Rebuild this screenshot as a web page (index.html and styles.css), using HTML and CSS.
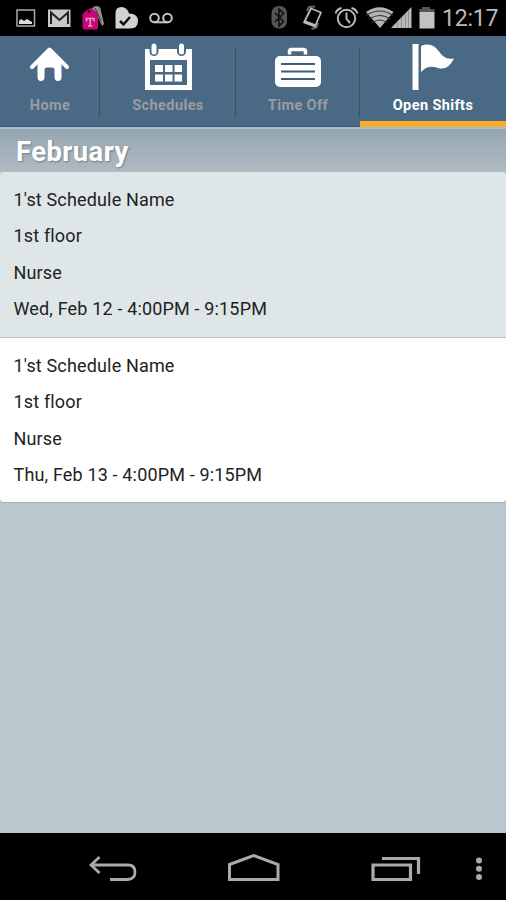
FILE: index.html
```html
<!DOCTYPE html>
<html lang="en">
<head>
  <meta charset="UTF-8">
  <title>Open Shifts</title>
  <link rel="stylesheet" href="styles.css">
</head>
<body>
  <div class="screen">

    <!-- Status bar -->
    <div class="status-bar">
      <div class="status-icons">
        <svg width="32" height="36" viewBox="10 0 32 36">
          <rect x="17" y="10" width="17.5" height="16" fill="none" stroke="#aaa" stroke-width="1.5"/>
          <path d="M19 24v-3l2-2 3 2 3-2 5 3v2z" fill="#ddd"/>
        </svg>
        <svg width="34" height="36" viewBox="42 0 34 36">
          <rect x="48" y="9.500" width="22.500" height="17.500" fill="#c8c8c8"/>
          <path d="M51 24V12.500L59.500 20L68 12.500V24" fill="none" stroke="#222" stroke-width="2"/>
        </svg>
        <svg width="34" height="36" viewBox="76 0 34 36">
          <path d="M91 12q0-5 5-6 5 0 5 5l3 13-2 2-5-11-3 4z" fill="#909090"/>
          <path d="M95 8l6 13" stroke="#333"/>
          <path d="M87 10l4-2 7 5v14q0 2.500-2 2.500H85q-2.500 0-2.500-2.500V14z" fill="#c5067a"/>
          <circle cx="89" cy="11.500" r="1.400" fill="#300"/>
          <path d="M86.500 21.500v-3h7.500v3M90.200 18.500V26M88 26h4.500" fill="none" stroke="#ef9ccb" stroke-width="1.500"/>
        </svg>
        <svg width="34" height="36" viewBox="110 0 34 36">
          <path d="M115.500 28.500V13q0-6 6-6 5.500 0 7.500 6.500 9 0 9 7.500 0 7.500-8 7.500z" fill="#d2d2d2"/>
          <path d="M120 21l3.500 3.500 6.500-7.500" fill="none" stroke="#111" stroke-width="2.500"/>
        </svg>
        <svg width="36" height="36" viewBox="144 0 36 36">
          <g fill="none" stroke="#c5c5c5" stroke-width="2">
            <circle cx="154.500" cy="18" r="4.300"/><circle cx="167.500" cy="18" r="4.300"/>
            <path d="M154.500 22.300h13"/>
          </g>
        </svg>
      </div>
      <div class="status-icons">
        <svg width="30" height="36" viewBox="265 0 30 36">
          <rect x="271.500" y="6" width="15.500" height="22.500" rx="7" fill="#555"/>
          <path d="M275 13l8.500 8.500-4.500 4.500V9l4.500 4.500-8.500 8.500" fill="none" stroke="#111" stroke-width="1.600"/>
        </svg>
        <svg width="35" height="36" viewBox="295 0 35 36">
          <path d="M307 11l2-4 6-.5M318 23l-1.500 4.500-5 1.500" fill="none" stroke="#666" stroke-width="2"/>
          <path d="M311 8.500l10 4-6 14-11-4z" fill="#000" stroke="#bbb" stroke-width="1.800" stroke-linejoin="round"/>
          <path d="M304.500 21.500l10.500 4" stroke="#bbb" stroke-width="2.500"/>
        </svg>
        <svg width="34" height="36" viewBox="330 0 34 36">
          <g fill="none" stroke="#bbb" stroke-width="1.900">
            <circle cx="346.500" cy="18.500" r="8.700"/>
            <path d="M346.500 12.500v6.500l3.500 4M335.500 13.500q1.500-4.500 6-5.500M351.500 8q4.500 1 6 5.500"/>
          </g>
        </svg>
        <svg width="30" height="36" viewBox="364 0 30 36">
          <path d="M366 12q13.500-9.500 27.500 0L380 28z" fill="#b5b5b5"/>
          <path d="M366 15.500q14-9 27 0M369 19q11-7 21 0M372 22.500q8-5 15 0" fill="none" stroke="#333" stroke-width="1.200"/>
        </svg>
        <svg class="signal" width="24" height="36" viewBox="391 0 24 36">
          <path d="M391 28L411.500 7v21z" fill="#b8b8b8"/>
          <path d="M397.500 21v7M401.500 17v11M405.500 13v15M408.500 10v18" stroke="#909090"/>
        </svg>
        <svg width="28" height="36" viewBox="415 0 28 36">
          <path d="M422 7h8v2h4.500v4h-15V9h2.500z" fill="#555"/>
          <rect x="419.500" y="12" width="15" height="16.500" fill="#c2c2c2"/>
        </svg>
        <span class="clock">12:17</span>
      </div>
    </div>

    <!-- Tabs -->
    <nav class="tabs">
      <div class="tab tab-home">
        <svg width="50" height="54" viewBox="0 0 50 54">
          <path d="M7 31L24.500 13.500L42 31" fill="none" stroke="#fff" stroke-width="4" stroke-linecap="round" stroke-linejoin="round"/>
          <path d="M24.500 13L12.500 26v15q0 4 3.500 4t3.500-4v-7q0-2.500 2.500-2.500h5q2.500 0 2.500 2.500v7q0 4 3.500 4t3.500-4V26z" fill="#fff"/>
        </svg>
        <span>Home</span>
      </div>
      <div class="tab tab-schedules">
        <svg width="50" height="54" viewBox="0 0 50 54">
          <path d="M2 13h47v41H2z" fill="#fff"/>
          <path d="M7 24h37v25H7z" fill="#4a6985"/>
          <g fill="#4a6985"><rect x="6.500" y="6" width="9" height="14" rx="4.500"/><rect x="34" y="6" width="9" height="14" rx="4.500"/></g>
          <g fill="#fff">
            <rect x="8.500" y="7.500" width="5" height="11" rx="2.500"/><rect x="36" y="7.500" width="5" height="11" rx="2.500"/>
            <path d="M12 29h8v7h-8zM22 29h7.500v7H22zM31.500 29h7.500v7h-7.500zM12 38.500h8v7h-8zM22 38.500h7.500v7H22zM31.500 38.500h7.500v7h-7.500z"/>
          </g>
        </svg>
        <span>Schedules</span>
      </div>
      <div class="tab tab-timeoff">
        <svg width="50" height="54" viewBox="0 0 50 54">
          <path d="M16.500 18.500v-3q0-2 2-2h12q2 0 2 2v3" fill="none" stroke="#fff" stroke-width="3.500"/>
          <rect x="2" y="20" width="46" height="31" rx="5" fill="#fff"/>
          <path d="M8 28h34M8 35.500h34M8 43h34" stroke="#3d5e7c" stroke-width="2"/>
        </svg>
        <span>Time Off</span>
      </div>
      <div class="tab tab-shifts active">
        <svg width="50" height="54" viewBox="0 0 50 54">
          <path d="M4.500 8h6v46.500h-6z" fill="#fff"/>
          <path d="M13 10Q24 5.500 31 15.500Q37 24.500 46 22.500Q40 35 30 32Q20 28 13 36z" fill="#fff"/>
        </svg>
        <span>Open Shifts</span>
      </div>
    </nav>

    <!-- Shift list -->
    <h1 class="month">February</h1>
    <ul class="shifts">
      <li class="shift">
        <p>1'st Schedule Name</p>
        <p>1st floor</p>
        <p>Nurse</p>
        <p>Wed, Feb 12 - 4:00PM - 9:15PM</p>
      </li>
      <li class="shift">
        <p>1'st Schedule Name</p>
        <p>1st floor</p>
        <p>Nurse</p>
        <p>Thu, Feb 13 - 4:00PM - 9:15PM</p>
      </li>
    </ul>

    <!-- Navigation bar -->
    <div class="nav-bar">
      <svg width="50" height="32" viewBox="88 852 50 32">
        <path d="M91 865h37q7 0 7 7t-7 7.500h-18M99.500 857l-8.500 8 8.500 8" fill="none" stroke="#aaa" stroke-width="2.800"/>
      </svg>
      <svg width="56" height="32" viewBox="226 852 56 32">
        <path d="M229.500 864.500l24-9 24.500 9v15h-48.500z" fill="none" stroke="#aaa" stroke-width="3"/>
      </svg>
      <svg width="52" height="32" viewBox="370 852 52 32">
        <path d="M373 865h37.500v14.500H373zM382 858.500h36.500V874" fill="none" stroke="#aaa" stroke-width="3.200"/>
      </svg>
      <svg class="menu" width="10" height="32" viewBox="474 852 10 32">
        <g fill="#aaa"><circle cx="479" cy="860.500" r="3"/><circle cx="479" cy="868.800" r="3"/><circle cx="479" cy="877" r="3"/></g>
      </svg>
    </div>
  </div>
</body>
</html>
```
FILE: styles.css
```css
body {
  margin: 0;
  font-family: Roboto, sans-serif;
  background-color: #000;
}
svg {
  display: block;
  flex: none;
}
.screen {
  display: flex;
  flex-direction: column;
  width: 506px;
  height: 900px;
  background-color: #b9c8cf;
  overflow: hidden;
}

/* Status bar */
.status-bar {
  display: flex;
  justify-content: space-between;
  height: 36px;
  padding: 0 7px 0 10px;
  background-color: #000;
}
.status-icons {
  display: flex;
}
.signal {
  margin-left: -3px;
}
.clock {
  width: 56px;
  font-size: 23px;
  line-height: 38px;
  letter-spacing: -0.2px;
  text-indent: -1px;
  color: #bbb;
  white-space: nowrap;
}

/* Tabs */
.tabs {
  display: flex;
  height: 91px;
  background-color: #4a6985;
  border-bottom: 2px solid #a9bccf;
}
.tab {
  display: flex;
  flex-direction: column;
  align-items: center;
  box-sizing: border-box;
  color: #999da2;
  font-size: 14.5px;
  font-weight: 700;
  letter-spacing: 0.4px;
  border-bottom: 1px solid #365878;
  background: linear-gradient(#3c5063, #3c5063) right 11px / 1px 70px no-repeat;
}
.tab span {
  margin-top: 8px;
  line-height: 16px;
}
.tab-home {
  width: 100px;
}
.tab-schedules {
  width: 136px;
}
.tab-timeoff {
  width: 124px;
}
.tab-shifts {
  width: 146px;
}
.tab.active {
  color: #fff;
  background: none;
  border-bottom: 6px solid #fbac2b;
}

/* Shift list */
.month {
  height: 43px;
  margin: 0;
  padding-left: 16px;
  box-sizing: border-box;
  font-size: 27.5px;
  font-weight: 700;
  letter-spacing: 0.4px;
  line-height: 45px;
  color: #fff;
  text-shadow: 1px 1px 2px rgba(60, 75, 85, 0.5);
  background: linear-gradient(#95a6b0, #b0bbc3);
}
.shifts {
  flex: 1;
  margin: 0;
  padding: 0;
  list-style: none;
}
.shift {
  box-sizing: border-box;
  height: 165px;
  padding: 9.5px 13.5px 0;
  background-color: #fff;
  border-bottom: 1px solid #a3adb2;
  border-radius: 0 0 4px 4px;
}
.shift:first-child {
  height: 166px;
  background-color: #dfe6e8;
  border-bottom-color: #b3c4c5;
  border-radius: 4px 4px 0 0;
}
.shift p {
  margin: 0;
  font-size: 18px;
  line-height: 36.6px;
  letter-spacing: 0.16px;
  color: #222;
}

/* Navigation bar */
.nav-bar {
  display: flex;
  align-items: center;
  gap: 88px;
  box-sizing: border-box;
  height: 67px;
  padding: 2px 22px 0 88px;
  background-color: #000;
}
.menu {
  margin-left: -36px;
}
```
